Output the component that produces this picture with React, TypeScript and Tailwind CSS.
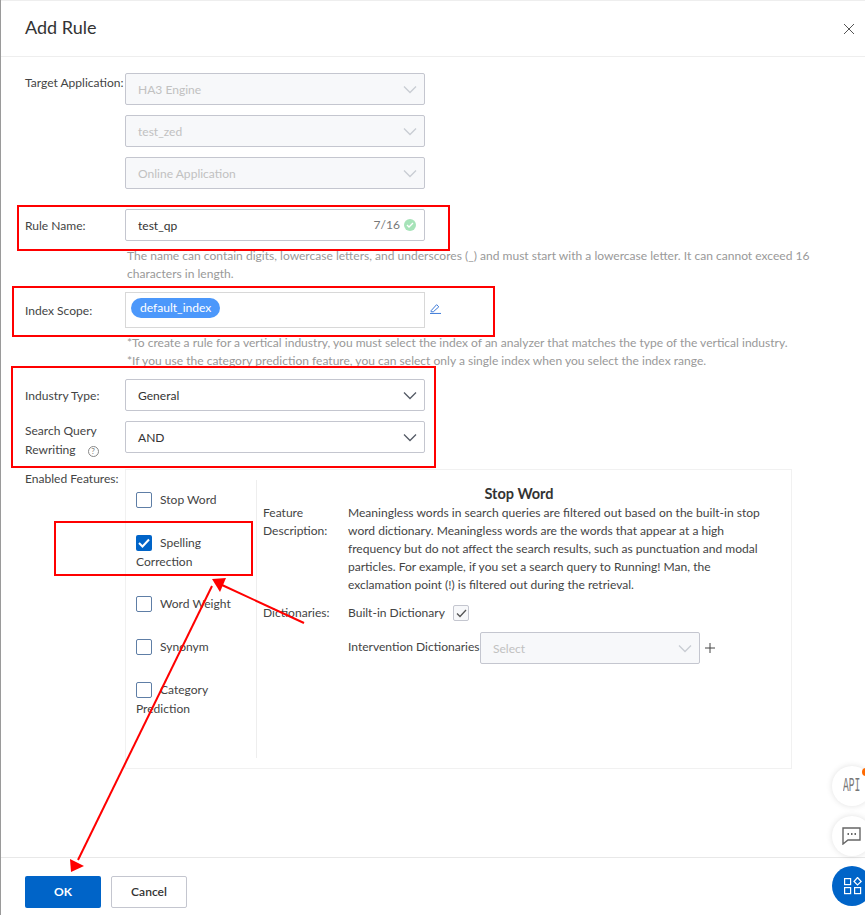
import React from "react";

const ChevronIcon = ({ muted }: { muted?: boolean }) => (
  <svg width="14" height="9" viewBox="0 0 14 9" fill="none" className="shrink-0">
    <path d="M1 1.5 L7 7.5 L13 1.5" stroke={muted ? "#c9cdd3" : "#555b66"} strokeWidth="1.3" />
  </svg>
);

const Select = ({ value, disabled, className }: { value: string; disabled?: boolean; className?: string }) => (
  <div
    className={
      "flex h-8 items-center justify-between rounded-[2px] border border-[#c4c6cf] pl-3 pr-[7px] " +
      (disabled ? "bg-[#f7f8fa] text-[#c1c1c1] " : "bg-white text-[#333] ") +
      (className ?? "w-[300px]")
    }
  >
    <span className="pt-[1px]">{value}</span>
    <ChevronIcon muted={disabled} />
  </div>
);

const Feature = ({ lines, checked }: { lines: [string, string?]; checked?: boolean }) => (
  <div className="pb-[25px] leading-[18px] text-[#444]">
    <div className="flex h-[18px] items-center gap-[8px]">
      {checked ? (
        <span className="flex h-4 w-4 items-center justify-center rounded-[2px] bg-[#0064c8]">
          <svg width="12" height="10" viewBox="0 0 12 10" fill="none">
            <path d="M1 5 L4.5 8.5 L11 1.5" stroke="white" strokeWidth="2" />
          </svg>
        </span>
      ) : (
        <span className="h-4 w-4 rounded-[2px] border border-[#5e7ea6] bg-white" />
      )}
      {lines[0]}
    </div>
    {lines[1] && <div className="h-[18px] pt-[1px]">{lines[1]}</div>}
  </div>
);

export default function App() {
  return (
    <div
      className="relative flex h-[915px] w-[865px] flex-col overflow-hidden border-l border-[#9a9a9a] bg-white text-[12.05px] leading-[18px] text-[#333]"
      style={{ fontFamily: 'Lato, "Open Sans", sans-serif' }}
    >
      <header className="flex h-[57px] shrink-0 items-center justify-between border-t border-b border-[#eeeeee] pb-[3px] pl-6 pr-[10px]">
        <h1 className="text-[18px] font-normal text-[#333]">Add Rule</h1>
        <svg width="12" height="12" viewBox="0 0 12 12" fill="none" className="mt-[3px]">
          <path d="M1 1 L11 11 M11 1 L1 11" stroke="#555" strokeWidth="1" />
        </svg>
      </header>

      <main className="flex flex-1 flex-col pl-6 pt-4">
        <div className="flex">
          <label className="w-[100px] whitespace-nowrap pt-[1px] text-[#444]">Target Application:</label>
          <div className="flex flex-col gap-[10px]">
            <Select value="HA3 Engine" disabled />
            <Select value="test_zed" disabled />
            <Select value="Online Application" disabled />
          </div>
        </div>

        <div className="mt-5 flex items-center">
          <label className="w-[100px] pt-[1px] text-[#444]">Rule Name:</label>
          <div className="flex h-8 w-[300px] items-center justify-between rounded-[2px] border border-[#c4c6cf] pl-3 pr-[8px]">
            <span className="pt-[1px]">test_qp</span>
            <span className="flex items-center gap-[4px] text-[#777]">
              7/16
              <span className="flex h-3 w-3 items-center justify-center rounded-full bg-[#a6e3b8]">
                <svg width="8" height="6" viewBox="0 0 8 6" fill="none">
                  <path d="M1 3 L3 5 L7 1" stroke="white" strokeWidth="1.3" />
                </svg>
              </span>
            </span>
          </div>
        </div>
        <p className="ml-[102px] mt-[6px] w-[700px] text-[#999]">
          The name can contain digits, lowercase letters, and underscores (_) and must start with a lowercase letter. It can cannot exceed 16 characters in length.
        </p>

        <div className="mt-[9px] flex items-center">
          <label className="w-[100px] pt-[1px] text-[#444]">Index Scope:</label>
          <div className="h-9 w-[300px] border border-[#d8d8d8] pl-[5px] pt-[5px]">
            <span className="inline-flex h-5 items-center rounded-full bg-[#4c98fb] px-[9px] text-white">default_index</span>
          </div>
          <svg width="11" height="11" viewBox="0 0 10 10" fill="none" className="ml-[5px] mb-[4px]">
            <path d="M1 7 L6 1.5 L8 3.5 L3 8 L1 8 Z M0 9.5 H10" stroke="#3b78d8" strokeWidth="0.9" />
          </svg>
        </div>
        <p className="ml-[102px] mt-[6px] text-[#999]">
          *To create a rule for a vertical industry, you must select the index of an analyzer that matches the type of the vertical industry.
        </p>
        <p className="ml-[102px] text-[#999]">
          *If you use the category prediction feature, you can select only a single index when you select the index range.
        </p>

        <div className="mt-[9px] flex items-center">
          <label className="w-[100px] pt-[1px] text-[#444]">Industry Type:</label>
          <Select value="General" />
        </div>
        <div className="mt-[10px] flex items-start">
          <label className="w-[100px] leading-[19px] text-[#444]">
            Search Query
            <br />
            Rewriting
            <span className="ml-[12px] inline-flex h-[11px] w-[11px] items-center justify-center rounded-full border border-[#888] text-[8px] leading-none text-[#777]">?</span>
          </label>
          <Select value="AND" />
        </div>

        <div className="mt-[10px] flex">
          <label className="w-[100px] whitespace-nowrap pt-[1px] text-[#444]">Enabled Features:</label>
          <div className="flex h-[300px] w-[667px] border border-[#f1f1f1]">
            <div className="my-[10px] w-[131px] border-r border-[#eeeeee] pl-[10px] pt-[11px]">
              <Feature lines={["Stop Word"]} />
              <Feature lines={["Spelling", "Correction"]} checked />
              <Feature lines={["Word Weight"]} />
              <Feature lines={["Synonym"]} />
              <Feature lines={["Category", "Prediction"]} />
            </div>
            <div className="flex-1 pl-[6px] pt-[15px] text-[#444]">
              <h2 className="w-[512px] text-center text-[14.5px] leading-[18px] font-bold text-[#333]">Stop Word</h2>
              <div className="mt-[1px] flex">
                <span className="w-[85px] shrink-0">
                  Feature
                  <br />
                  Description:
                </span>
                <p className="w-[424px]">
                  Meaningless words in search queries are filtered out based on the built-in stop word dictionary. Meaningless words are the words that appear at a high frequency but do not affect the search results, such as punctuation and modal particles. For example, if you set a search query to Running! Man, the exclamation point (!) is filtered out during the retrieval.
                </p>
              </div>
              <div className="mt-[10px] flex items-center">
                <span className="w-[85px] shrink-0">Dictionaries:</span>
                <span className="w-[105px]">Built-in Dictionary</span>
                <span className="flex h-4 w-4 items-center justify-center rounded-[2px] border border-[#c4c6cf] bg-[#f7f8fa]">
                  <svg width="11" height="9" viewBox="0 0 11 9" fill="none">
                    <path d="M1 4.5 L4 7.5 L10 1" stroke="#555" strokeWidth="1.3" />
                  </svg>
                </span>
              </div>
              <div className="mt-[10px] flex items-center">
                <span className="ml-[85px] w-[132px] whitespace-nowrap pb-[2px]">Intervention Dictionaries</span>
                <Select value="Select" disabled className="w-[220px]" />
                <svg width="12" height="12" viewBox="0 0 12 12" fill="none" className="ml-[4px]">
                  <path d="M6 1 V11 M1 6 H11" stroke="#444" strokeWidth="1" />
                </svg>
              </div>
            </div>
          </div>
        </div>
      </main>

      <footer className="flex h-[58px] shrink-0 gap-[10px] border-t border-[#e8e8e8] pl-6 pt-[18px]">
        <button className="h-8 w-[76px] rounded-[2px] bg-[#0064c8] font-bold text-white">OK</button>
        <button className="h-8 w-[76px] rounded-[2px] border border-[#c4c6cf] bg-white font-semibold text-[#333]">Cancel</button>
      </footer>

      {/* annotations drawn over the screenshot */}
      <div className="absolute left-[16px] top-[205px] h-[46px] w-[433px] border-2 border-[#ff0000]" />
      <div className="absolute left-[11px] top-[286px] h-[51px] w-[483px] border-2 border-[#ff0000]" />
      <div className="absolute left-[10px] top-[366px] h-[102px] w-[425px] border-2 border-[#ff0000]" />
      <div className="absolute left-[53px] top-[521px] h-[55px] w-[199px] border-2 border-[#ff0000]" />
      <svg className="absolute left-[-1px] top-0" width="865" height="915" fill="none">
        <path d="M304 623 L222 585" stroke="#ff0000" strokeWidth="2" />
        <path d="M212 586 L78 860" stroke="#ff0000" strokeWidth="2" />
        <path d="M212 579 L226 578 L220 592 Z" fill="#ff0000" />
        <path d="M71 872 L70 859 L84 866 Z" fill="#ff0000" />
      </svg>

      {/* floating help buttons */}
      <div className="absolute left-[831px] top-[766px] flex h-10 w-10 items-center justify-start rounded-full bg-white pl-[11px] shadow-[0_0_6px_rgba(0,0,0,0.12)]">
        <span className="origin-left scale-x-[0.48] text-[20px] leading-none text-[#777]" style={{ fontFamily: '"Liberation Mono", monospace' }}>API</span>
      </div>
      <div className="absolute left-[861px] top-[768px] h-2 w-2 rounded-full bg-[#ff6a00]" />
      <div className="absolute left-[831px] top-[816px] flex h-10 w-10 items-center justify-start rounded-full bg-white pl-[10px] shadow-[0_0_6px_rgba(0,0,0,0.12)]">
        <svg width="19" height="18" viewBox="0 0 19 18" fill="none">
          <path d="M1 1 H18 V13 H6 L1 17 Z" stroke="#666" strokeWidth="1.4" />
          <path d="M5.5 7 H7 M9 7 H10.5 M12.5 7 H14" stroke="#666" strokeWidth="2" />
        </svg>
      </div>
      <div className="absolute left-[831px] top-[866px] flex h-10 w-10 items-center justify-start rounded-full bg-[#0064c8] pl-[12px]">
        <svg width="18" height="18" viewBox="0 0 18 18" fill="none" stroke="white" strokeWidth="1.2">
          <rect x="0.6" y="1.6" width="6" height="6" />
          <rect x="0.6" y="10.6" width="6" height="6" />
          <rect x="10.6" y="10.6" width="6" height="6" />
          <path d="M13.5 0.5 L17.2 4.5 L13.5 8 L10 4.5 Z" />
        </svg>
      </div>
    </div>
  );
}
